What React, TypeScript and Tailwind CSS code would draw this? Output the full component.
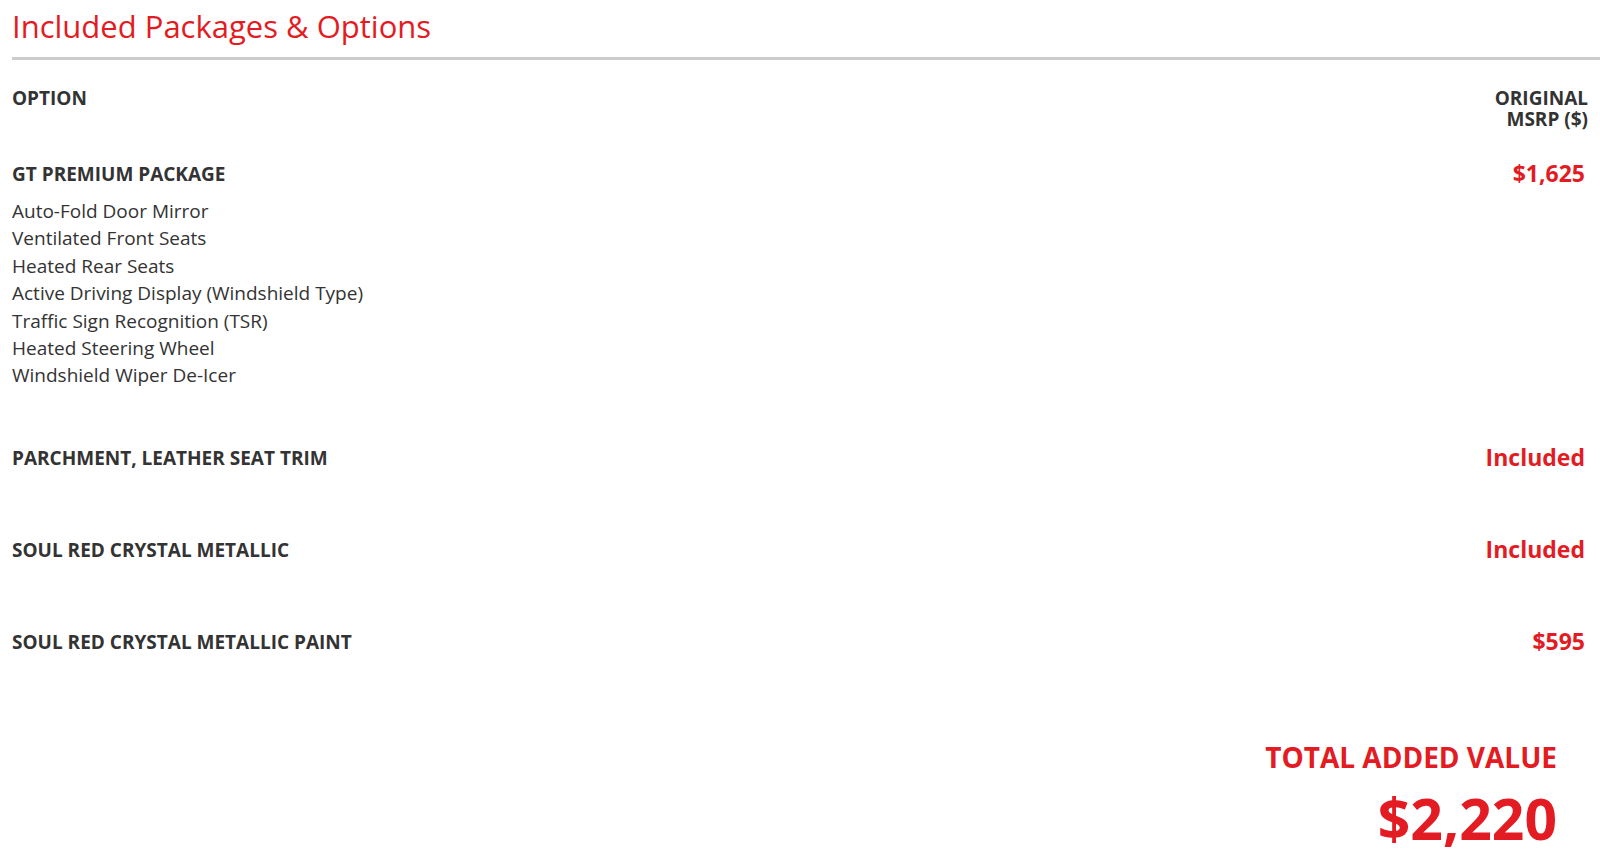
import React from "react";

const packages = [
  {
    name: "GT PREMIUM PACKAGE",
    price: "$1,625",
    items: [
      "Auto-Fold Door Mirror",
      "Ventilated Front Seats",
      "Heated Rear Seats",
      "Active Driving Display (Windshield Type)",
      "Traffic Sign Recognition (TSR)",
      "Heated Steering Wheel",
      "Windshield Wiper De-Icer",
    ],
  },
  { name: "PARCHMENT, LEATHER SEAT TRIM", price: "Included", items: [] },
  { name: "SOUL RED CRYSTAL METALLIC", price: "Included", items: [] },
  { name: "SOUL RED CRYSTAL METALLIC PAINT", price: "$595", items: [] },
];

export default function App() {
  return (
    <div
      className="min-h-screen bg-white pl-3 text-[#333333]"
      style={{ fontFamily: '"Open Sans", "Liberation Sans", sans-serif' }}
    >
      <h2 className="pt-[5px] text-[31px] leading-[42px] text-[#e31b23]">
        Included Packages &amp; Options
      </h2>
      <div className="mt-[10px] h-[3px] bg-[#cccccc]" />

      {/* Column headers */}
      <div className="mt-[28px] flex items-start justify-between pr-3">
        <span className="text-[19px] font-bold leading-[21px]">OPTION</span>
        <div className="flex flex-col items-end text-[19px] font-bold leading-[21px]">
          <span>ORIGINAL</span>
          <span>MSRP ($)</span>
        </div>
      </div>

      {/* Rows */}
      <div className="mt-[32px] flex flex-col gap-[56px] pr-[15px]">
        {packages.map((pkg) => (
          <div key={pkg.name} className={pkg.items.length > 0 ? "" : "pb-3"}>
            <div className="flex items-start justify-between">
              <span className="text-[19px] font-bold leading-[24px]">{pkg.name}</span>
              <span className="-mt-[2px] text-[23px] font-bold leading-[26px] text-[#e31b23]">
                {pkg.price}
              </span>
            </div>
            {pkg.items.length > 0 && (
              <ul className="mt-[12px] text-[19px] leading-[27.4px]">
                {pkg.items.map((item) => (
                  <li key={item}>{item}</li>
                ))}
              </ul>
            )}
          </div>
        ))}
      </div>

      {/* Total */}
      <div className="mt-[75px] flex flex-col items-end pr-[43px] text-[#e31b23]">
        <span className="text-[28px] font-bold leading-[32px]">TOTAL ADDED VALUE</span>
        <span className="mt-[15px] text-[57px] font-bold leading-[60px]">$2,220</span>
      </div>
    </div>
  );
}
